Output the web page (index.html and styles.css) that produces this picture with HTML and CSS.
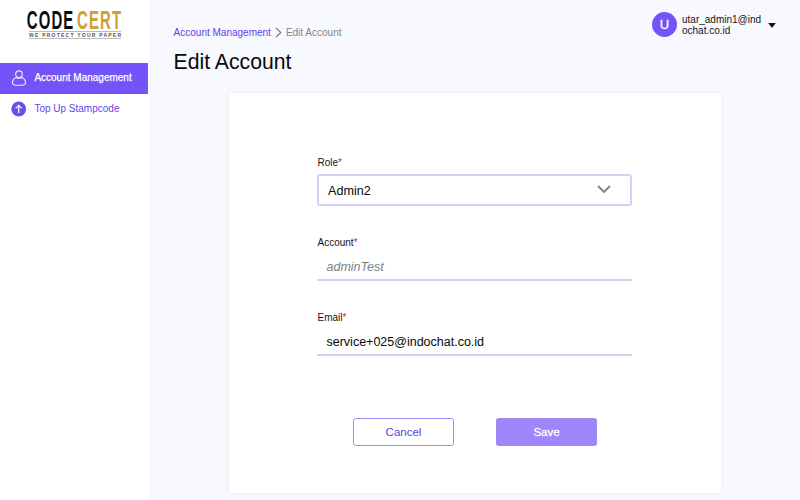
FILE: index.html
```html
<!DOCTYPE html>
<html lang="en">
<head>
<meta charset="utf-8">
<title>Edit Account</title>
<link rel="stylesheet" href="styles.css">
</head>
<body>
<div class="app">
  <aside class="sidebar">
    <svg class="logo" width="149" height="63" viewBox="0 0 149 63">
      <g class="logo-word">
        <text x="26.7" y="29" textLength="47.8" lengthAdjust="spacingAndGlyphs">CODE</text>
        <text class="gold" x="77" y="29" textLength="45.3" lengthAdjust="spacingAndGlyphs">CERT</text>
      </g>
      <path d="M29 31.5H121M29 38.5H121" stroke="#aaa" stroke-width=".8"/>
      <text class="tagline" x="29" y="36.8" textLength="92">WE PROTECT YOUR PAPER</text>
    </svg>
    <nav>
      <a class="nav-item active">
        <svg width="16" height="18" viewBox="0 0 16 18" fill="none" stroke="#f0ecff" stroke-width="1.1"><circle cx="8" cy="5.2" r="3.3"/><path d="M5.2 8.4C2.7 9.4 1.5 11.4 1.5 13.6C1.5 15.3 2.6 16.2 4.8 16.2H11.2C13.4 16.2 14.5 15.3 14.5 13.6C14.5 11.4 13.3 9.4 10.8 8.4C9 9.4 7 9.4 5.2 8.4Z"/></svg>
        <span>Account Management</span>
      </a>
      <a class="nav-item topup">
        <svg width="16" height="16" viewBox="0 0 16 16"><circle cx="7.7" cy="8" r="7.4" fill="#6b4eee"/><path d="M7.7 12V4.5M4.7 7.3L7.7 4.3L10.7 7.3" fill="none" stroke="#fff" stroke-width="1.2"/></svg>
        <span>Top Up Stampcode</span>
      </a>
    </nav>
  </aside>
  <main class="main">
    <header class="topbar">
      <div class="heading">
        <div class="crumbs"><a>Account Management</a><svg width="7" height="11" viewBox="0 0 7 11"><path d="M1 1L5.8 5.5L1 10" fill="none" stroke="#77777f" stroke-width="1.1"/></svg><span>Edit Account</span></div>
        <h1>Edit Account</h1>
      </div>
      <div class="user">
        <div class="avatar">U</div>
        <div class="user-name">utar_admin1@ind<br>ochat.co.id</div>
        <svg class="caret" width="8" height="5" viewBox="0 0 8 5"><path d="M.2 0H7.8L4 5Z" fill="#111"/></svg>
      </div>
    </header>
    <form class="card">
      <div class="field role">
        <label>Role<b>*</b></label>
        <div class="select"><span>Admin2</span><svg width="14" height="9" viewBox="0 0 14 9"><path d="M1 1L7 7L13 1" fill="none" stroke="#7b8490" stroke-width="1.9"/></svg></div>
      </div>
      <div class="field">
        <label>Account<b>*</b></label>
        <div class="line disabled"><span>adminTest</span></div>
      </div>
      <div class="field">
        <label>Email<b>*</b></label>
        <div class="line"><span class="email">service+025@indochat.co.id</span></div>
      </div>
      <div class="actions">
        <button type="button" class="cancel">Cancel</button>
        <button type="button" class="save">Save</button>
      </div>
    </form>
  </main>
</div>
</body>
</html>
```
FILE: styles.css
```css
* { box-sizing: border-box; }
body { margin: 0; font-family: "Liberation Sans", Arial, sans-serif; color: #151519; }
.app { display: flex; width: 800px; height: 500px; overflow: hidden; background: #f8f9fe; }
.sidebar { width: 149px; background: #fff; flex: none; }
.logo { display: block; }
.logo-word { font-size: 25px; font-weight: bold; fill: #0b0b0b; letter-spacing: 2px; }
.logo-word .gold { fill: #cda032; }
.tagline { font-size: 5px; font-weight: bold; fill: #555; }
.nav-item { display: flex; align-items: center; width: 148px; height: 30.5px; padding-left: 11px; gap: 7.4px; font-size: 10px; color: #6545e6; white-space: nowrap; }
.nav-item span { position: relative; top: -1px; }
.nav-item.active { background: #7453f8; color: #fff; }
.nav-item.topup span { top: 0; }
.active span { -webkit-text-stroke: .25px #fff; }
.main { flex: 1; min-width: 0; }
.topbar { display: flex; justify-content: space-between; height: 93px; padding-left: 24.6px; }
.crumbs { display: flex; align-items: center; margin-top: 26px; height: 13px; font-size: 10px; color: #82838c; gap: 4px; }
.crumbs a { color: #6440e6; }
h1 { margin: 9px 0 0; font-size: 21.2px; line-height: 28px; font-weight: normal; color: #08080b; }
.user { display: flex; align-items: flex-start; width: 148px; padding-top: 12px; }
.avatar { width: 25px; height: 25px; border-radius: 50%; background: #7453f8; color: #fff; text-align: center; font-size: 13px; line-height: 25px; -webkit-text-stroke: .3px #fff; }
.user-name { width: 86px; margin: 2px 0 0 5px; font-size: 10px; line-height: 11px; white-space: nowrap; }
.caret { margin-top: 11px; }
.card { width: 492px; height: 400px; margin-left: 80px; padding: 63px 89px 0 88px; background: #fff; box-shadow: 0 0 4px #ece9f7; }
.field { height: 75px; }
.field.role { height: 80px; }
label { display: block; height: 18px; font-size: 10px; line-height: 13px; padding-left: .5px; }
label b { color: #e0203c; font-weight: normal; }
.select { display: flex; align-items: center; justify-content: space-between; height: 32px; padding: 1px 19px 0 9px; border: 2px solid #d6cef6; border-radius: 3px; font-size: 12.6px; color: #08080b; }
.select svg { margin-top: -2px; }
.line { height: 26.5px; padding: 5px 9.5px 0; border-bottom: 2px solid #d6cef2; font-size: 12.5px; line-height: 16px; color: #08080b; }
.line.disabled { font-style: italic; color: #7a838c; }
.actions { display: flex; gap: 42px; margin-top: 32px; padding-left: 36px; }
button { width: 101px; height: 28px; padding: 0; border: 1px solid #a08bf3; border-radius: 2.5px; background: #fff; color: #6042dc; font: 11.5px "Liberation Sans", Arial, sans-serif; }
.save { background: #9e86fc; color: #fff; -webkit-text-stroke: .3px #fff; }
```
